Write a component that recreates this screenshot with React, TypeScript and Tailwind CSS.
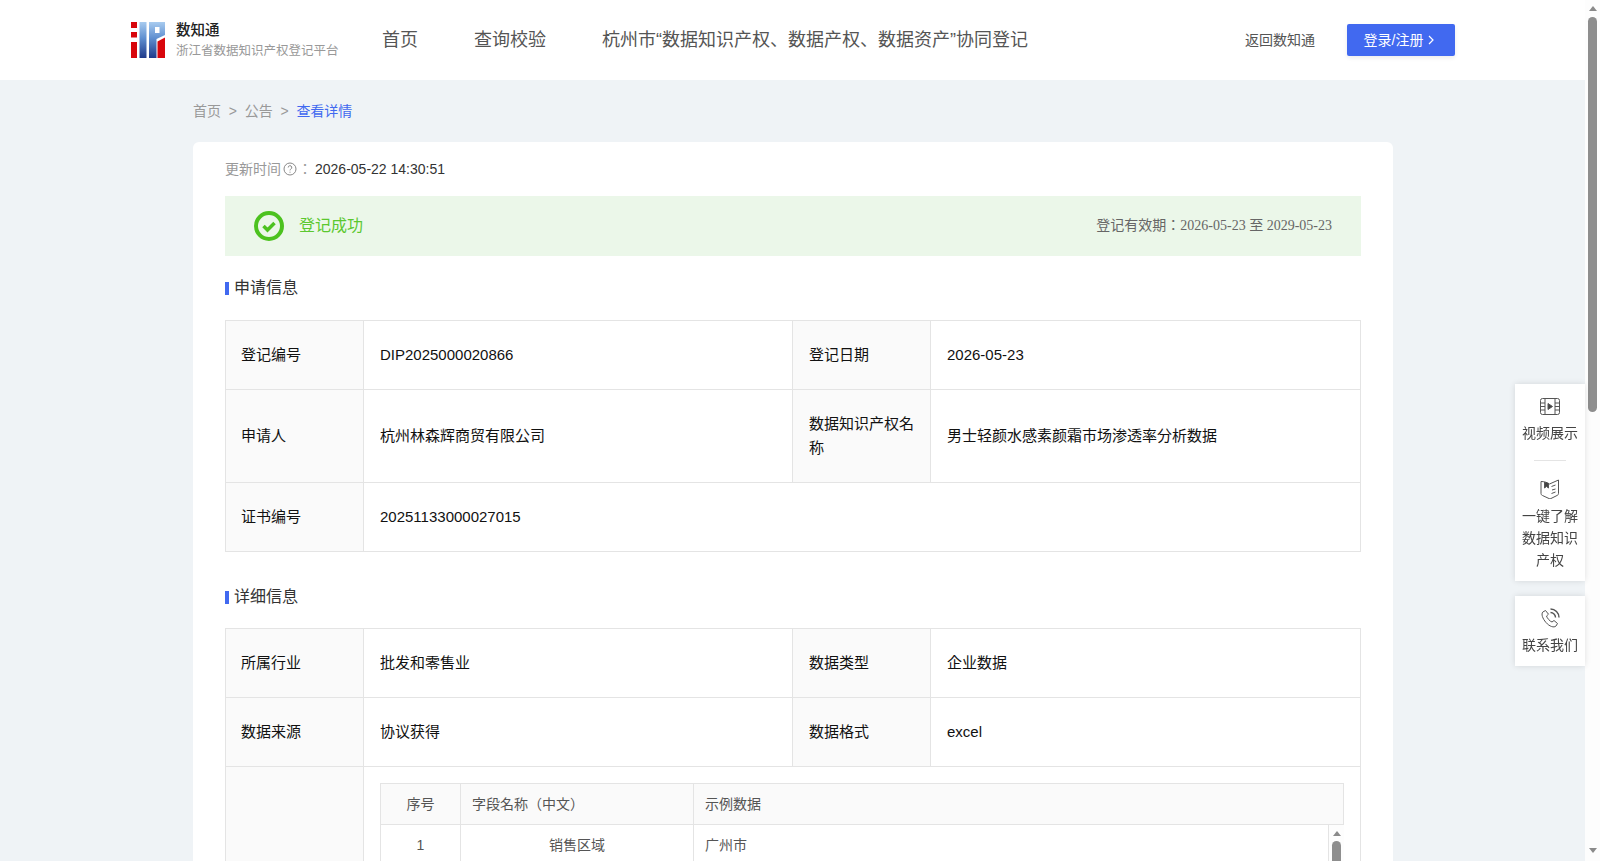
import React from "react";

const FONT = "font-['Liberation_Sans','Noto_Sans_CJK_JP',sans-serif]";
const LABEL = "flex items-center bg-[#fafafa] border-r border-[#e4e4e4] pl-[15px] pr-3";
const LABEL2 = "flex items-center bg-[#fafafa] border-r border-[#e4e4e4] pl-4 pr-3";
const VALUE = "flex items-center pl-4 pr-3";

function Logo() {
  return (
    <svg width="35" height="36" viewBox="0 0 35 36" className="shrink-0">
      <defs>
        <linearGradient id="bl" x1="0" y1="0" x2="0" y2="1">
          <stop offset="0" stopColor="#a8cbef" />
          <stop offset="0.45" stopColor="#5f8fd0" />
          <stop offset="1" stopColor="#1f3a8a" />
        </linearGradient>
      </defs>
      <path d="M0 0h6v6H0zM0 10h6v5.500H0zM0 20h6v16H0z" fill="#d8060c" />
      <rect x="8.500" y="0" width="7" height="36" fill="url(#bl)" />
      <path d="M18 0h16v13L25.500 17V36H18z" fill="url(#bl)" />
      <rect x="24" y="5" width="4.500" height="6" fill="#fff" />
      <path d="M26.500 19.500L34 15.500V36h-7.500z" fill="#d8060c" />
    </svg>
  );
}

function Title({ children }: { children: React.ReactNode }) {
  return (
    <div className="flex items-center text-[16px] text-[#333] leading-6">
      <span className="w-1 h-[13px] bg-[#4169f0] mr-[5px]" />
      {children}
    </div>
  );
}

function Up() {
  return <div className="w-0 h-0 mx-auto border-x-[4.5px] border-x-transparent border-b-[5px] border-b-[#8a8a8a]" />;
}

function Down() {
  return <div className="w-0 h-0 mx-auto border-x-[4.5px] border-x-transparent border-t-[5px] border-t-[#8a8a8a]" />;
}

export default function App() {
  return (
    <div className={`${FONT} [text-spacing-trim:space-all] flex h-[861px] overflow-hidden bg-[#eff3f6] text-[14px] text-[#111]`}>
      <div className="flex-1 min-w-0 overflow-hidden">
        <header className="h-20 bg-white flex items-center pl-[131px] pr-[130px]">
          <Logo />
          <div className="ml-[10px] w-[172px]">
            <div className="text-[14.500px] leading-5 text-[#222] font-medium">数知通</div>
            <div className="text-[12.500px] leading-5 mt-[1px] text-[#999] whitespace-nowrap">浙江省数据知识产权登记平台</div>
          </div>
          <nav className="flex items-center text-[18px] text-[#555] gap-[56px] ml-[34px] pt-[1px]">
            <span>首页</span>
            <span>查询校验</span>
            <span>杭州市“数据知识产权、数据产权、数据资产”协同登记</span>
          </nav>
          <span className="ml-auto text-[14px] text-[#555]">返回数知通</span>
          <button className="ml-[32px] w-[108px] h-8 rounded-[2px] bg-[#4169f0] text-white text-[14px] flex items-center justify-center gap-[5px] pr-[4px] shadow-[0_2px_4px_rgba(0,0,0,0.08)]">
            登录/注册
            <svg width="6" height="10" viewBox="0 0 6 10" fill="none" stroke="#fff" strokeWidth="1.200">
              <path d="M1 1l4 4-4 4" />
            </svg>
          </button>
        </header>

        <main className="w-[1200px] ml-[193px]">
          <div className="h-[62px] flex items-center text-[14px] text-[#999] pt-[1px]">
            首页<span className="mx-[7.750px]">&gt;</span>公告<span className="mx-[7.750px]">&gt;</span><span className="text-[#4169f0]">查看详情</span>
          </div>

          <section className="bg-white rounded-t-[6px] px-8 pt-[18px]">
            <div className="flex items-center h-[18px] text-[14px]">
              <span className="text-[#999]">更新时间</span>
              <svg width="14" height="14" viewBox="0 0 14 14" fill="none" stroke="#888" className="ml-[2px]">
                <circle cx="7" cy="7" r="6" />
                <path d="M5.200 5.500a1.800 1.800 0 1 1 2.600 1.600c-.6.300-.8.700-.8 1.300M7 9.700v1" />
              </svg>
              <span className="text-[#999] ml-[1px]">：</span>
              <span className="text-[#333] ml-[3px]">2026-05-22 14:30:51</span>
            </div>

            <div className="mt-[18px] h-[60px] bg-[#ebf7e9] flex items-center px-[29px]">
              <svg width="30" height="30" viewBox="0 0 30 30" fill="none" stroke="#4cc21f">
                <circle cx="15" cy="15" r="13" strokeWidth="4" />
                <path d="M9.500 15l4 4 7-7" strokeWidth="3.500" />
              </svg>
              <span className="ml-[15px] text-[16px] text-[#5bc82f]">登记成功</span>
              <span className="ml-auto text-[14px] text-[#666] pb-[1px] font-['Liberation_Serif','Noto_Sans_CJK_JP',serif]">
                登记有效期：2026-05-23 至 2029-05-23
              </span>
            </div>

            <div className="mt-[20px]"><Title>申请信息</Title></div>

            <div className="mt-[20px] border border-[#e4e4e4] text-[15px] leading-[32px]">
              <div className="grid grid-cols-[138px_429px_138px_1fr] h-[69px] border-b border-[#e4e4e4]">
                <div className={LABEL}>登记编号</div>
                <div className={`${VALUE} border-r border-[#e4e4e4]`}>DIP2025000020866</div>
                <div className={LABEL2}>登记日期</div>
                <div className={VALUE}>2026-05-23</div>
              </div>
              <div className="grid grid-cols-[138px_429px_138px_1fr] h-[93px] border-b border-[#e4e4e4]">
                <div className={LABEL}>申请人</div>
                <div className={`${VALUE} border-r border-[#e4e4e4]`}>杭州林森辉商贸有限公司</div>
                <div className={`${LABEL2} leading-6`}>数据知识产权名称</div>
                <div className={VALUE}>男士轻颜水感素颜霜市场渗透率分析数据</div>
              </div>
              <div className="grid grid-cols-[138px_1fr] h-[68px]">
                <div className={LABEL}>证书编号</div>
                <div className={VALUE}>20251133000027015</div>
              </div>
            </div>

            <div className="mt-[33px]"><Title>详细信息</Title></div>

            <div className="mt-[19px] border border-[#e4e4e4] text-[15px] leading-[32px]">
              <div className="grid grid-cols-[138px_429px_138px_1fr] h-[69px] border-b border-[#e4e4e4]">
                <div className={LABEL}>所属行业</div>
                <div className={`${VALUE} border-r border-[#e4e4e4]`}>批发和零售业</div>
                <div className={LABEL2}>数据类型</div>
                <div className={VALUE}>企业数据</div>
              </div>
              <div className="grid grid-cols-[138px_429px_138px_1fr] h-[69px] border-b border-[#e4e4e4]">
                <div className={LABEL}>数据来源</div>
                <div className={`${VALUE} border-r border-[#e4e4e4]`}>协议获得</div>
                <div className={LABEL2}>数据格式</div>
                <div className={VALUE}>excel</div>
              </div>
              <div className="grid grid-cols-[138px_1fr] h-[300px]">
                <div className="bg-[#fafafa] border-r border-[#e4e4e4]" />
                <div className="px-4 pt-4 text-[14px] text-[#555] leading-[20px]">
                  <div className="border border-[#e4e4e4]">
                    <div className="flex h-[41px] bg-[#fafafa] border-b border-[#e4e4e4] items-center">
                      <div className="w-[80px] border-r border-[#e4e4e4] h-full flex items-center justify-center">序号</div>
                      <div className="w-[233px] px-[11px] border-r border-[#e4e4e4] h-full flex items-center">字段名称（中文）</div>
                      <div className="px-[11px]">示例数据</div>
                    </div>
                    <div className="flex h-[220px]">
                      <div className="flex-1 min-w-0">
                        <div className="flex h-10 border-b border-[#e4e4e4] items-center">
                          <div className="w-[80px] border-r border-[#e4e4e4] h-full flex items-center justify-center">1</div>
                          <div className="w-[233px] px-3 border-r border-[#e4e4e4] h-full flex items-center justify-center">销售区域</div>
                          <div className="px-[11px]">广州市</div>
                        </div>
                      </div>
                      <div className="w-[16px] -mr-[1px] shrink-0 border-l border-[#e4e4e4] bg-[#fdfdfd] pt-[6px]">
                        <Up />
                        <div className="mt-[5px] mx-auto w-[9px] h-[120px] rounded-[4.500px] bg-[#8e8e8e]" />
                      </div>
                    </div>
                  </div>
                </div>
              </div>
            </div>
          </section>
        </main>
      </div>

      <div className="w-[15px] shrink-0 bg-[#fdfdfd] flex flex-col pt-[6px] pb-[8px]">
        <Up />
        <div className="mt-[6px] mx-auto w-[9px] h-[395px] rounded-[4.500px] bg-[#8e8e8e]" />
        <div className="mt-auto"><Down /></div>
      </div>

      <aside className="fixed right-[15px] top-[384px] w-[70px] text-[14px] leading-[22px] text-[#444] text-center">
        <div className="bg-white h-[197px] shadow-[0_0_6px_rgba(0,0,0,0.12)] pt-[14px]">
          <svg width="20" height="18" viewBox="0 0 20 18" fill="none" stroke="#555" className="mx-auto">
            <rect x="0.500" y="0.500" width="19" height="16" rx="2" />
            <path d="M5 .5v16M15 .5v16M.5 5H5M.5 8.500H5M.5 12H5M15 5h4.500M15 8.500h4.500M15 12h4.500" />
            <path d="M8 5.500l4.500 3L8 11.500z" fill="#444" />
          </svg>
          <div className="mt-[6px]">视频展示</div>
          <div className="mx-auto w-8 border-t border-[#e4e4e4] mt-[16px]" />
          <svg width="20" height="20" viewBox="0 0 20 20" fill="none" stroke="#555" className="mx-auto mt-[18px]">
            <path d="M1 2.500c3 0 6 .8 8.500 2.500L18.500 1v13.500c0 1-.5 1.500-1.500 2L10 20 2.500 16.500C1.500 16 1 15.500 1 14.500z" />
            <path d="M4.500 3v6l2-1.500L8.500 9V4" fill="#444" />
            <path d="M11.500 7.500l4-1.500M12 11l3.500-1M11.500 14.500l4-1.500" />
          </svg>
          <div className="mt-[6px] px-1">一键了解数据知识产权</div>
        </div>
        <div className="bg-white h-[70px] mt-[15px] shadow-[0_0_6px_rgba(0,0,0,0.12)] pt-[12px]">
          <svg width="20" height="20" viewBox="0 0 20 20" fill="none" stroke="#555" className="mx-auto">
            <path d="M5.500 2.500L2.800 4C1 6 2.500 10.500 6 14.500s8 5.500 10 3.500l1.500-2.500-3.500-3-2 1.500c-2-.5-5-4-5.500-6l2-1.800z" />
            <path d="M10.500 1a8.500 8.500 0 0 1 8.500 8.500" strokeWidth="1.400" />
            <path d="M10.500 4.500a5 5 0 0 1 5 5" strokeWidth="1.400" />
          </svg>
          <div className="mt-[6px]">联系我们</div>
        </div>
      </aside>
    </div>
  );
}
